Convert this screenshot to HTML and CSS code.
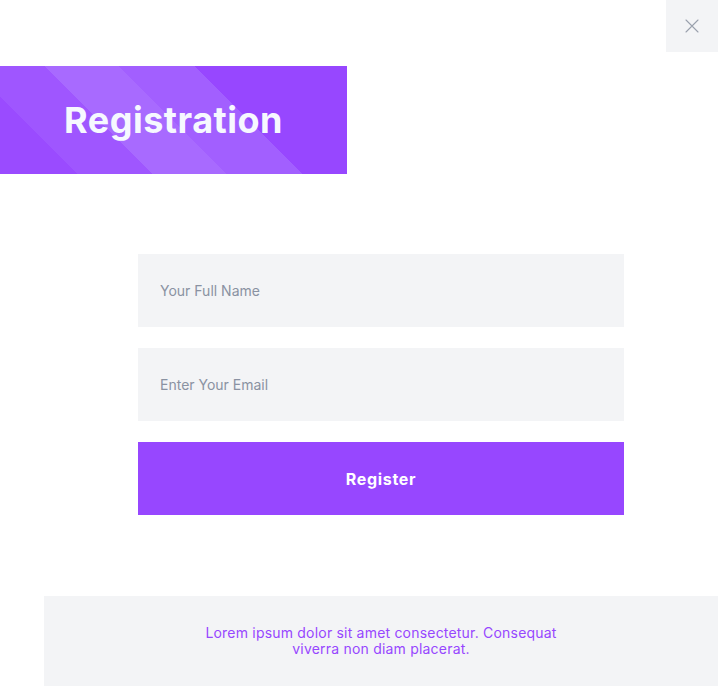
FILE: index.html
```html
<!DOCTYPE html>
<html lang="en">
<head>
<meta charset="utf-8">
<title>Registration</title>
<link rel="stylesheet" href="styles.css">
</head>
<body>
<div class="page">
  <div class="topbar">
    <button class="close" aria-label="Close">
      <svg width="14" height="14" viewBox="0 0 14 14" fill="none" stroke="#9aa1ad" stroke-width="1.1" stroke-linecap="round">
        <path d="M1 1L13 13M13 1L1 13"/>
      </svg>
    </button>
  </div>
  <div class="banner">
    <h1 class="title">Registration</h1>
  </div>
  <form class="form">
    <input class="field" type="text" placeholder="Your Full Name">
    <input class="field" type="email" placeholder="Enter Your Email">
    <button class="submit" type="button">Register</button>
  </form>
  <div class="footer">
    <p class="note">Lorem ipsum dolor sit amet consectetur. Consequat<br>viverra non diam placerat.</p>
  </div>
</div>
</body>
</html>
```
FILE: styles.css
```css
* { box-sizing: border-box; }
html, body { margin: 0; padding: 0; background: #ffffff; }
body { font-family: "Inter", "Noto Sans", sans-serif; width: 718px; height: 686px; overflow: hidden; }
.page { display: flex; flex-direction: column; }
.topbar { display: flex; justify-content: flex-end; }
.close {
  width: 52px; height: 52px; border: 0; padding: 0; margin: 0;
  background: #f3f4f6; display: flex; align-items: center; justify-content: center;
}
.banner {
  margin-top: 14px; width: 347px; height: 108px; padding-left: 64px;
  display: flex; align-items: center;
  background: linear-gradient(45deg,
    #9a4bff 0px, #9a4bff 55px,
    #9f56ff 55px, #9f56ff 108px,
    #a86aff 108px, #a86aff 160px,
    #a25fff 160px, #a25fff 214px,
    #9747ff 214px, #9747ff 100%);
}
.title {
  margin: 0; color: #f6f8ff; font-family: "Inter", sans-serif; font-weight: 700;
  font-size: 36px; letter-spacing: 0.5px; line-height: 1; padding-bottom: 0;
}
.form {
  margin: 80px 0 0 138px; width: 486px;
  display: flex; flex-direction: column; gap: 21px;
}
.field {
  height: 73px; border: 0; outline: 0; background: #f3f4f6;
  padding: 0 22px; font-family: "Inter", sans-serif; font-size: 14px; color: #4b5563;
}
.field::placeholder { color: #8a92a2; }
.submit {
  height: 73px; border: 0; background: #9747ff; color: #ffffff;
  font-family: "Inter", sans-serif; font-weight: 700; font-size: 16px; letter-spacing: 0.7px;
}
.footer {
  margin: 81px 0 0 44px; height: 90px; background: #f3f4f6;
  display: flex; justify-content: center; padding-top: 29px;
}
.note {
  margin: 0; text-align: center; color: #9747ff;
  font-family: "Inter", sans-serif; font-size: 14px; line-height: 15.5px; letter-spacing: 0.2px;
}
```
